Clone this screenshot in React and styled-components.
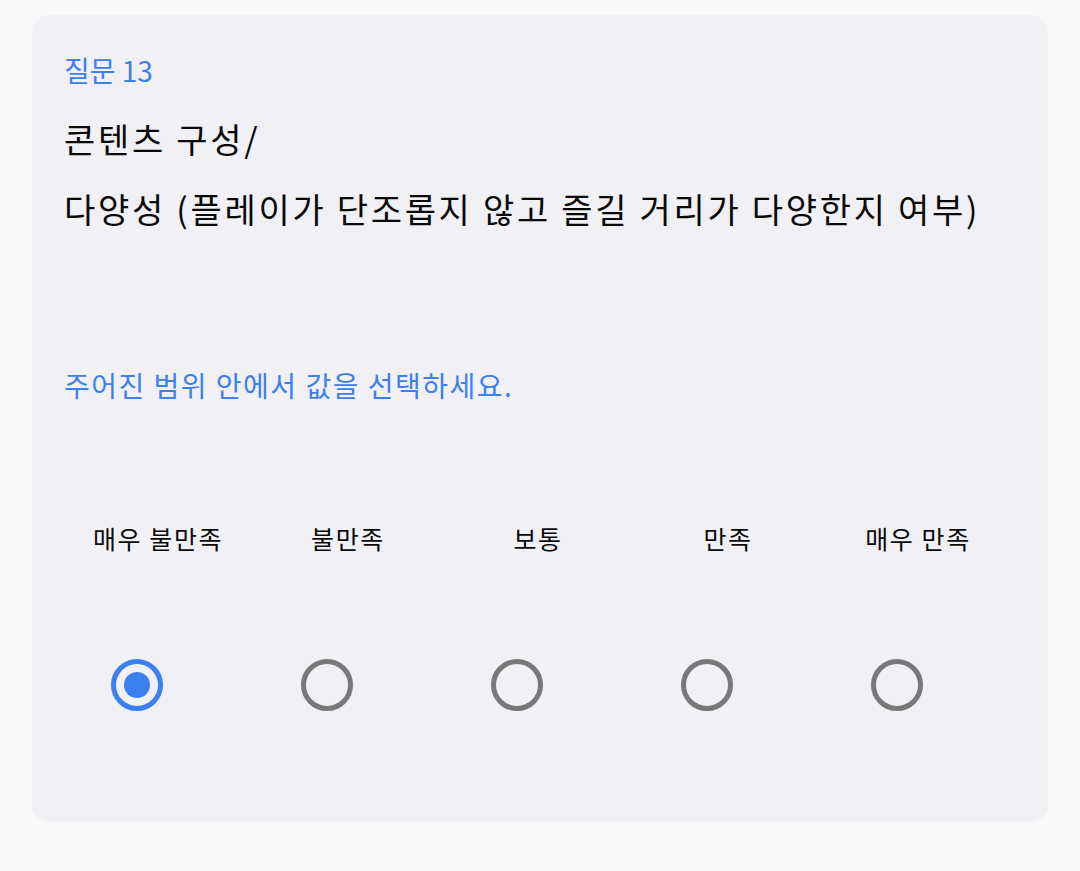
import React, { useState } from "react";
import styled, { createGlobalStyle } from "styled-components";

const Global = createGlobalStyle`
  html, body { margin: 0; padding: 0; background: #f8f8f8; }
  body { font-family: "Noto Sans CJK KR", "Noto Sans", sans-serif; }
`;

const Page = styled.div`
  padding: 15px 32px 49px 32px;
  background: #f8f8f8;
`;

const Card = styled.section`
  background: #f0f0f5;
  border-radius: 18px;
  height: 807px;
  box-sizing: border-box;
  padding: 35px 0 0 0;
  display: flex;
  flex-direction: column;
`;

const Inner = styled.div`
  padding: 0 0 0 32px;
`;

const QNum = styled.div`
  color: #3b80ec;
  font-size: 28px;
  line-height: 40px;
`;

const Title = styled.h2`
  margin: 14px 0 0 0;
  font-weight: 400;
  font-size: 34px;
  line-height: 70px;
  color: #0a0a0a;
  letter-spacing: 2.7px;
`;

const Prompt = styled.p`
  margin: 121px 0 0 0;
  color: #3b80ec;
  font-size: 28px;
  line-height: 40px;
  letter-spacing: 1.5px;
`;

const Scale = styled.div`
  margin-top: 116px;
  display: flex;
  flex-direction: column;
  gap: 104px;
`;

const Row = styled.div`
  display: grid;
  grid-template-columns: repeat(5, 190px);
  padding-left: ${(p) => p.$indent}px;
`;

const Label = styled.div`
  text-align: center;
  font-size: 25px;
  line-height: 34px;
  color: #0a0a0a;
  white-space: nowrap;
  letter-spacing: 1.6px;
`;

const RadioCell = styled.div`
  display: flex;
  justify-content: center;
`;

const Radio = styled.button`
  width: 52px;
  height: 52px;
  border-radius: 50%;
  box-sizing: border-box;
  border: 5px solid ${(p) => (p.$on ? "#3b80f0" : "#787878")};
  background: transparent;
  padding: 0;
  display: flex;
  align-items: center;
  justify-content: center;
  cursor: pointer;
`;

const Dot = styled.span`
  width: 26px;
  height: 26px;
  border-radius: 50%;
  background: #3b80f0;
`;

const options = ["매우 불만족", "불만족", "보통", "만족", "매우 만족"];

export default function App() {
  const [sel, setSel] = useState(0);
  return (
    <>
      <Global />
      <Page>
        <Card>
          <Inner>
            <QNum>질문 13</QNum>
            <Title>
              콘텐츠 구성/
              <br />
              다양성 (플레이가 단조롭지 않고 즐길 거리가 다양한지 여부)
            </Title>
            <Prompt>주어진 범위 안에서 값을 선택하세요.</Prompt>
          </Inner>
          <Scale>
            <Row $indent={31}>
              {options.map((o) => (
                <Label key={o}>{o}</Label>
              ))}
            </Row>
            <Row $indent={10}>
              {options.map((o, i) => (
                <RadioCell key={o}>
                  <Radio $on={sel === i} onClick={() => setSel(i)} aria-label={o}>
                    {sel === i && <Dot />}
                  </Radio>
                </RadioCell>
              ))}
            </Row>
          </Scale>
        </Card>
      </Page>
    </>
  );
}
